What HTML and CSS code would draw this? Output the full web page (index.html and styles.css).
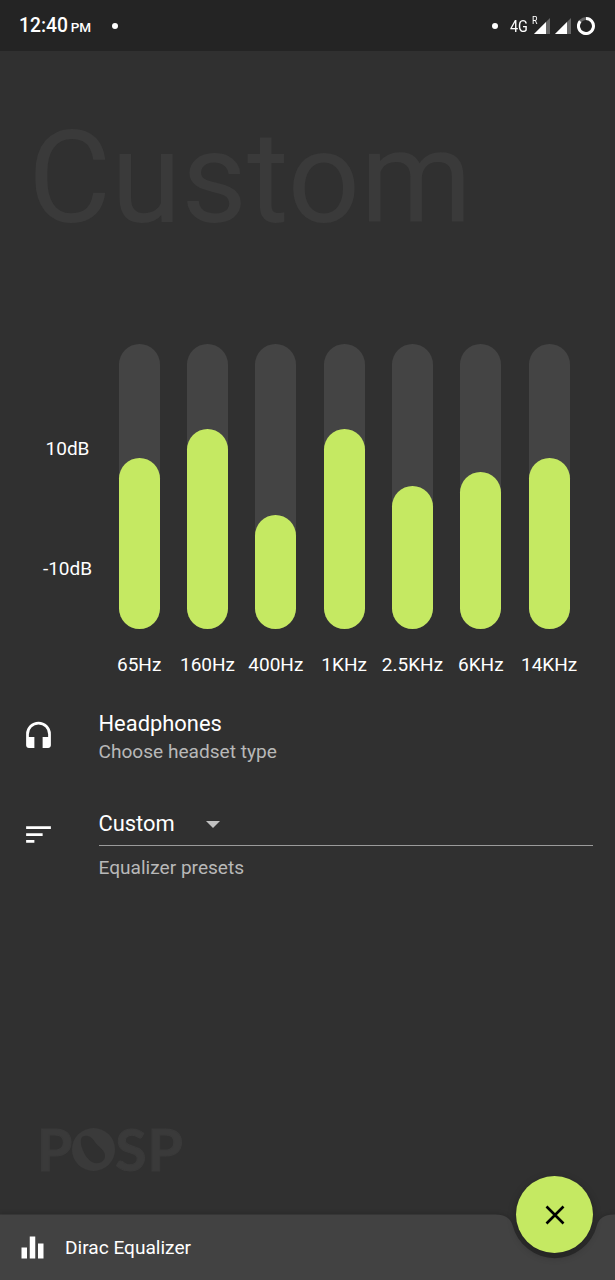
FILE: index.html
```html
<!DOCTYPE html>
<html lang="en">
<head>
    <meta charset="UTF-8">
    <meta name="viewport" content="width=device-width, initial-scale=1.0">
    <title>Dirac Equalizer</title>

    <link rel="stylesheet" href="styles.css">
</head>
<body>

    <!-- Status Bar -->
    <div class="status-bar">
        <div class="clock">12:40 <span class="ampm">PM</span></div>
        <span class="dot left-dot"></span>
        <div class="status-icons">
            <span class="dot"></span>
            <span class="network">4G</span>
            <span class="roaming">R</span>
            <svg class="signal" width="16" height="16" viewBox="0 0 16 16">
                <path d="M16 0V16H0z" fill="#666"/>
                <path d="M12 4V16H0z" fill="#fff"/>
            </svg>
            <svg class="signal second" width="16" height="16" viewBox="0 0 16 16">
                <path d="M16 0V16H0z" fill="#666"/>
                <path d="M12 4V16H0z" fill="#fff"/>
            </svg>
            <svg class="battery" width="18" height="18" viewBox="0 0 18 18">
                <circle cx="9" cy="9" r="7.5" fill="none" stroke="#666" stroke-width="3"/>
                <path d="M9 1.5A7.5 7.5 0 1 1 3.2 4.2" fill="none" stroke="#fff" stroke-width="3"/>
            </svg>
        </div>
    </div>

    <!-- Preset Name -->
    <h1 class="preset-title">Custom</h1>

    <!-- Equalizer -->
    <div class="equalizer">
        <div class="scale">
            <span>10dB</span>
            <span>-10dB</span>
        </div>
        <div class="bands">
            <div class="band">
                <div class="track"><div class="level" style="height: 60%"></div></div>
                <span>65Hz</span>
            </div>
            <div class="band">
                <div class="track"><div class="level" style="height: 70%"></div></div>
                <span>160Hz</span>
            </div>
            <div class="band">
                <div class="track"><div class="level" style="height: 40%"></div></div>
                <span>400Hz</span>
            </div>
            <div class="band">
                <div class="track"><div class="level" style="height: 70%"></div></div>
                <span>1KHz</span>
            </div>
            <div class="band">
                <div class="track"><div class="level" style="height: 50%"></div></div>
                <span>2.5KHz</span>
            </div>
            <div class="band">
                <div class="track"><div class="level" style="height: 55%"></div></div>
                <span>6KHz</span>
            </div>
            <div class="band">
                <div class="track"><div class="level" style="height: 60%"></div></div>
                <span>14KHz</span>
            </div>
        </div>
    </div>

    <!-- Settings -->
    <div class="setting">
        <svg class="icon" viewBox="0 0 24 24">
            <path d="M12 2a9 9 0 0 0-9 9v8c0 1.1.9 2 2 2h4v-8H5v-2a7 7 0 0 1 14 0v2h-4v8h4c1.100 0 2-.9 2-2v-8a9 9 0 0 0-9-9z"/>
        </svg>
        <div class="setting-text">
            <div class="label">Headphones</div>
            <div class="hint">Choose headset type</div>
        </div>
    </div>

    <div class="setting presets">
        <svg class="icon" viewBox="0 0 24 24">
            <path d="M3 18h6v-2H3v2zM3 6v2h18V6H3zm0 7h12v-2H3v2z"/>
        </svg>
        <div class="setting-text">
            <div class="select">
                <span class="label">Custom</span>
                <svg class="arrow" width="14" height="7" viewBox="0 0 14 7"><path d="M0 0h14L7 7z"/></svg>
            </div>
            <div class="hint">Equalizer presets</div>
        </div>
    </div>

    <!-- Logo -->
    <div class="logo">
        <span>P</span>
        <svg width="43" height="43" viewBox="0 0 43 43">
            <circle cx="21.5" cy="21.5" r="21.5" fill="#3a3a3a"/>
            <path d="M10 9C15 6 20 9 23 14C26 19 34 22 33 29C32 34 26 37 20 34C13 30 6 15 10 9z" fill="#303030"/>
        </svg>
        <span>S</span>
        <span>P</span>
    </div>

    <!-- Bottom Bar -->
    <div class="bottom-bar">
        <svg class="bar-shape" width="615" height="66" viewBox="0 0 615 66">
            <path d="M0 .5H495C506 .5 510.500 5 512.500 11A43.500 43.500 0 0 0 597 11C599 5 603.500 .5 614 .5H615V66H0z" fill="#424242"/>
        </svg>
        <svg class="icon" viewBox="0 0 24 24">
            <path d="M10 20h4V4h-4v16zm-6 0h4v-8H4v8zM16 9v11h4V9h-4z"/>
        </svg>
        <span class="app-name">Dirac Equalizer</span>
        <button class="fab" aria-label="Close">
            <svg width="20" height="20" viewBox="0 0 20 20">
                <path d="M1.500 1.500L18.500 18.500M18.500 1.500L1.500 18.500" stroke="#000" stroke-width="2.600"/>
            </svg>
        </button>
    </div>

</body>
</html>
```
FILE: styles.css
```css
/* Global Styles */
* {
    margin: 0;
    padding: 0;
    box-sizing: border-box;
}

body {
    display: flex;
    flex-direction: column;
    height: 1280px;
    overflow: hidden;
    background: #303030;
    color: white;
    font-family: Roboto, sans-serif;
}

/* Status Bar */
.status-bar {
    display: flex;
    align-items: center;
    height: 51px;
    padding: 0 20px 0 19px;
    background: #242424;
}

.clock {
    width: 93px;
    font-size: 19.300px;
    font-weight: 500;
    white-space: nowrap;
}

.ampm {
    margin-left: -2px;
    font-size: 13.500px;
}

.dot {
    width: 6px;
    height: 6px;
    border-radius: 50%;
    background: white;
}

.status-icons {
    display: flex;
    align-items: center;
    margin-left: auto;
}

.network {
    width: 22px;
    margin-left: 12px;
    font-size: 17px;
    transform: scaleX(0.85);
    transform-origin: left;
}

.roaming {
    width: 2px;
    margin-bottom: 11px;
    font-size: 10.500px;
    transform: scaleX(0.85);
    transform-origin: left;
}

.signal.second {
    margin-left: 5px;
}

.battery {
    margin-left: 6px;
}

/* Preset Name */
.preset-title {
    height: 293px;
    padding: 53px 0 0 28px;
    color: #3a3a3a;
    font-size: 127.500px;
    font-weight: 400;
    line-height: 150px;
}

/* Equalizer */
.equalizer {
    display: flex;
    height: 336px;
    font-size: 19px;
    line-height: 22px;
}

.scale {
    display: flex;
    flex-direction: column;
    gap: 98px;
    width: 105px;
    padding: 94px 0 0 30px;
    text-align: center;
}

.bands {
    display: flex;
    width: 478.300px;
}

.band {
    display: flex;
    flex: 1 0 0;
    flex-direction: column;
    align-items: center;
    gap: 25px;
    min-width: 0;
    white-space: nowrap;
}

.track {
    display: flex;
    flex-shrink: 0;
    align-items: flex-end;
    width: 41px;
    height: 284.500px;
    border-radius: 20.500px;
    background: #444;
}

.level {
    width: 100%;
    border-radius: 20.500px;
    background: #c5e962;
}

/* Settings */
.icon {
    flex-shrink: 0;
    width: 33px;
    height: 33px;
    fill: white;
}

.setting {
    display: flex;
    align-items: center;
    gap: 43.500px;
    height: 110px;
    padding: 0 22px;
}

.setting-text {
    flex: 1;
    padding-top: 5px;
}

.label {
    font-size: 21.900px;
    line-height: 28px;
}

.hint {
    color: #b8b8b8;
    font-size: 19.100px;
    line-height: 28px;
}

.presets {
    height: 88px;
}

.presets .setting-text {
    padding-top: 16px;
}

.select {
    display: flex;
    align-items: center;
    gap: 31px;
    height: 44px;
    margin-bottom: 8px;
    border-bottom: 1px solid #9b9b9b;
}

.arrow {
    margin-top: 1px;
    fill: #c1c1c1;
}

/* Logo */
.logo {
    display: flex;
    align-items: center;
    height: 44px;
    margin: auto 0 43px;
    padding-left: 37px;
    color: #3a3a3a;
    font-family: Lato, sans-serif;
    font-size: 57px;
    font-weight: 700;
    line-height: 44px;
    -webkit-text-stroke: 1px #3a3a3a;
}

.logo span:last-child {
    margin-left: 1px;
}

/* Bottom Bar */
.bottom-bar {
    position: relative;
    display: flex;
    align-items: center;
    gap: 16px;
    height: 66px;
    padding-left: 16px;
}

.bar-shape {
    position: absolute;
    top: 0;
    left: 0;
    filter: drop-shadow(0 -1px 2px rgba(0, 0, 0, 0.15));
}

.bottom-bar .icon,
.app-name {
    position: relative;
}

.app-name {
    font-size: 19.100px;
}

.fab {
    position: absolute;
    top: -38px;
    left: 516.200px;
    display: flex;
    align-items: center;
    justify-content: center;
    width: 77px;
    height: 77px;
    border: none;
    border-radius: 50%;
    background: #c5e962;
    box-shadow: 0 3px 8px rgba(0, 0, 0, 0.3);
    cursor: pointer;
}
```
